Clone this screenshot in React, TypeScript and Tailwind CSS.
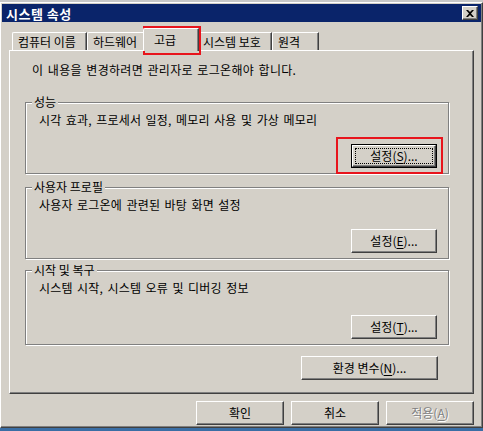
import type { ReactNode } from "react";

const font = { fontFamily: '"Noto Sans CJK KR", "Noto Sans", sans-serif' };

function Mn({ children }: { children: ReactNode }) {
  return <span className="underline underline-offset-2">{children}</span>;
}

function Btn({
  children,
  className = "",
  focused = false,
  disabled = false,
}: {
  children: ReactNode;
  className?: string;
  focused?: boolean;
  disabled?: boolean;
}) {
  if (focused) {
    return (
      <div className={`border border-black ${className}`}>
        <div className="flex h-full items-center justify-center border border-b-[#404040] border-l-white border-r-[#404040] border-t-white p-[2px] shadow-[inset_-1px_-1px_0_#808080]">
          <div className="flex h-full w-full items-center justify-center border border-dotted border-black text-[12px] leading-none">
            {children}
          </div>
        </div>
      </div>
    );
  }
  return (
    <div
      className={`flex items-center justify-center border border-b-[#404040] border-l-white border-r-[#404040] border-t-white text-[12px] leading-none shadow-[inset_-1px_-1px_0_#808080] ${
        disabled ? "text-[#808080] [text-shadow:1px_1px_0_#fff]" : "text-black"
      } ${className}`}
    >
      {children}
    </div>
  );
}

function Group({
  label,
  desc,
  height,
  className = "",
  children,
}: {
  label: string;
  desc: string;
  height: string;
  className?: string;
  children: ReactNode;
}) {
  return (
    <div
      className={`relative flex flex-col border border-[#808080] shadow-[inset_1px_1px_0_#fff,1px_1px_0_#fff] ${height} ${className}`}
    >
      <span className="absolute -top-[8px] left-[6px] bg-[#d4d0c8] px-[2px] text-[12px] leading-[14px]">
        {label}
      </span>
      <p className="pl-[13px] pt-[10px] text-[12px] leading-[14px] tracking-[0.2px] [word-spacing:1.5px]">
        {desc}
      </p>
      <div className="mt-auto mb-[5px] mr-[11px] flex justify-end">{children}</div>
    </div>
  );
}

function Tab({ label, className = "" }: { label: string; className?: string }) {
  return (
    <div
      className={`mt-[4px] flex h-[18px] items-center rounded-tl-[2px] border-l border-t border-l-white border-t-white border-r border-r-[#404040] pl-[5px] text-[12px] leading-none shadow-[inset_-1px_0_0_#808080] ${className}`}
    >
      {label}
    </div>
  );
}

export default function App() {
  return (
    <div
      className="flex h-[431px] w-[483px] flex-col overflow-hidden bg-[#3a6ea5] text-black"
      style={font}
    >
      <div className="h-[2px] bg-[#c8c8c8]" />
      <div className="relative flex h-[426px] flex-col border border-b-[#404040] border-l-white border-r-[#404040] border-t-white bg-[#d4d0c8] shadow-[inset_-1px_-1px_0_#808080]">
        {/* title bar */}
        <div className="mx-[1px] mt-[1px] flex h-[18px] items-center justify-between bg-[#0a246a] pl-[4px] pr-[3px]">
          <span className="text-[13px] font-bold leading-none tracking-[0.5px] text-white">시스템 속성</span>
          <div className="flex h-[14px] w-[16px] items-center justify-center border border-b-[#404040] border-l-white border-r-[#404040] border-t-white bg-[#d4d0c8] shadow-[inset_-1px_-1px_0_#808080]">
            <svg width="8" height="7" viewBox="0 0 8 7">
              <path d="M0 0h2l2 2 2-2h2L5 3.5 8 7H6L4 5 2 7H0l3-3.5z" fill="#000" />
            </svg>
          </div>
        </div>

        {/* tabs */}
        <div className="ml-[11px] mt-[6px] flex h-[22px] items-start">
          <Tab label="컴퓨터 이름" className="w-[75px]" />
          <Tab label="하드웨어" className="w-[58px]" />
          <div className="relative z-10 -mx-[2px] -mb-[1px] flex h-[23px] w-[56px] items-center rounded-tl-[2px] border-l border-t border-l-white border-t-white border-r border-r-[#404040] bg-[#d4d0c8] pl-[10px] text-[12px] leading-none shadow-[inset_-1px_0_0_#808080]">
            고급
          </div>
          <Tab label="시스템 보호" className="w-[75px]" />
          <Tab label="원격" className="w-[47px]" />
        </div>

        {/* tab panel */}
        <div className="mx-[8px] flex h-[344px] flex-col border border-b-[#404040] border-l-white border-r-[#404040] border-t-white shadow-[inset_-1px_-1px_0_#808080]">
          <p className="ml-[22px] mt-[12px] text-[12px] leading-[14px] tracking-[0.3px] [word-spacing:1.5px]">
            이 내용을 변경하려면 관리자로 로그온해야 합니다.
          </p>
          <div className="ml-[15px] mr-[24px] mt-[25px] flex flex-col">
            <Group label="성능" desc="시각 효과, 프로세서 일정, 메모리 사용 및 가상 메모리" height="h-[72px]">
              <Btn focused className="h-[24px] w-[86px]">
                설정(<Mn>S</Mn>)...
              </Btn>
            </Group>
            <Group label="사용자 프로필" desc="사용자 로그온에 관련된 바탕 화면 설정" height="h-[72px]" className="mt-[13px]">
              <Btn className="h-[24px] w-[86px]">
                설정(<Mn>E</Mn>)...
              </Btn>
            </Group>
            <Group label="시작 및 복구" desc="시스템 시작, 시스템 오류 및 디버깅 정보" height="h-[75px]" className="mt-[11px]">
              <Btn className="h-[24px] w-[86px]">
                설정(<Mn>T</Mn>)...
              </Btn>
            </Group>
            <div className="mr-[11px] mt-[11px] flex justify-end">
              <Btn className="h-[24px] w-[137px]">
                환경 변수(<Mn>N</Mn>)...
              </Btn>
            </div>
          </div>
        </div>

        {/* dialog buttons */}
        <div className="mr-[8px] mt-[7px] flex justify-end gap-[7px]">
          <Btn className="h-[24px] w-[88px]">확인</Btn>
          <Btn className="h-[24px] w-[88px]">취소</Btn>
          <Btn disabled className="h-[24px] w-[88px]">
            적용(<Mn>A</Mn>)
          </Btn>
        </div>

        {/* red highlight boxes */}
        <div className="pointer-events-none absolute left-[142px] top-[23px] h-[29px] w-[58px] border-2 border-[#e8141c]" />
        <div className="pointer-events-none absolute left-[335px] top-[134px] h-[37px] w-[107px] border-2 border-[#e8141c]" />
      </div>
      <div className="h-[3px] bg-[#3a6ea5]" />
    </div>
  );
}
